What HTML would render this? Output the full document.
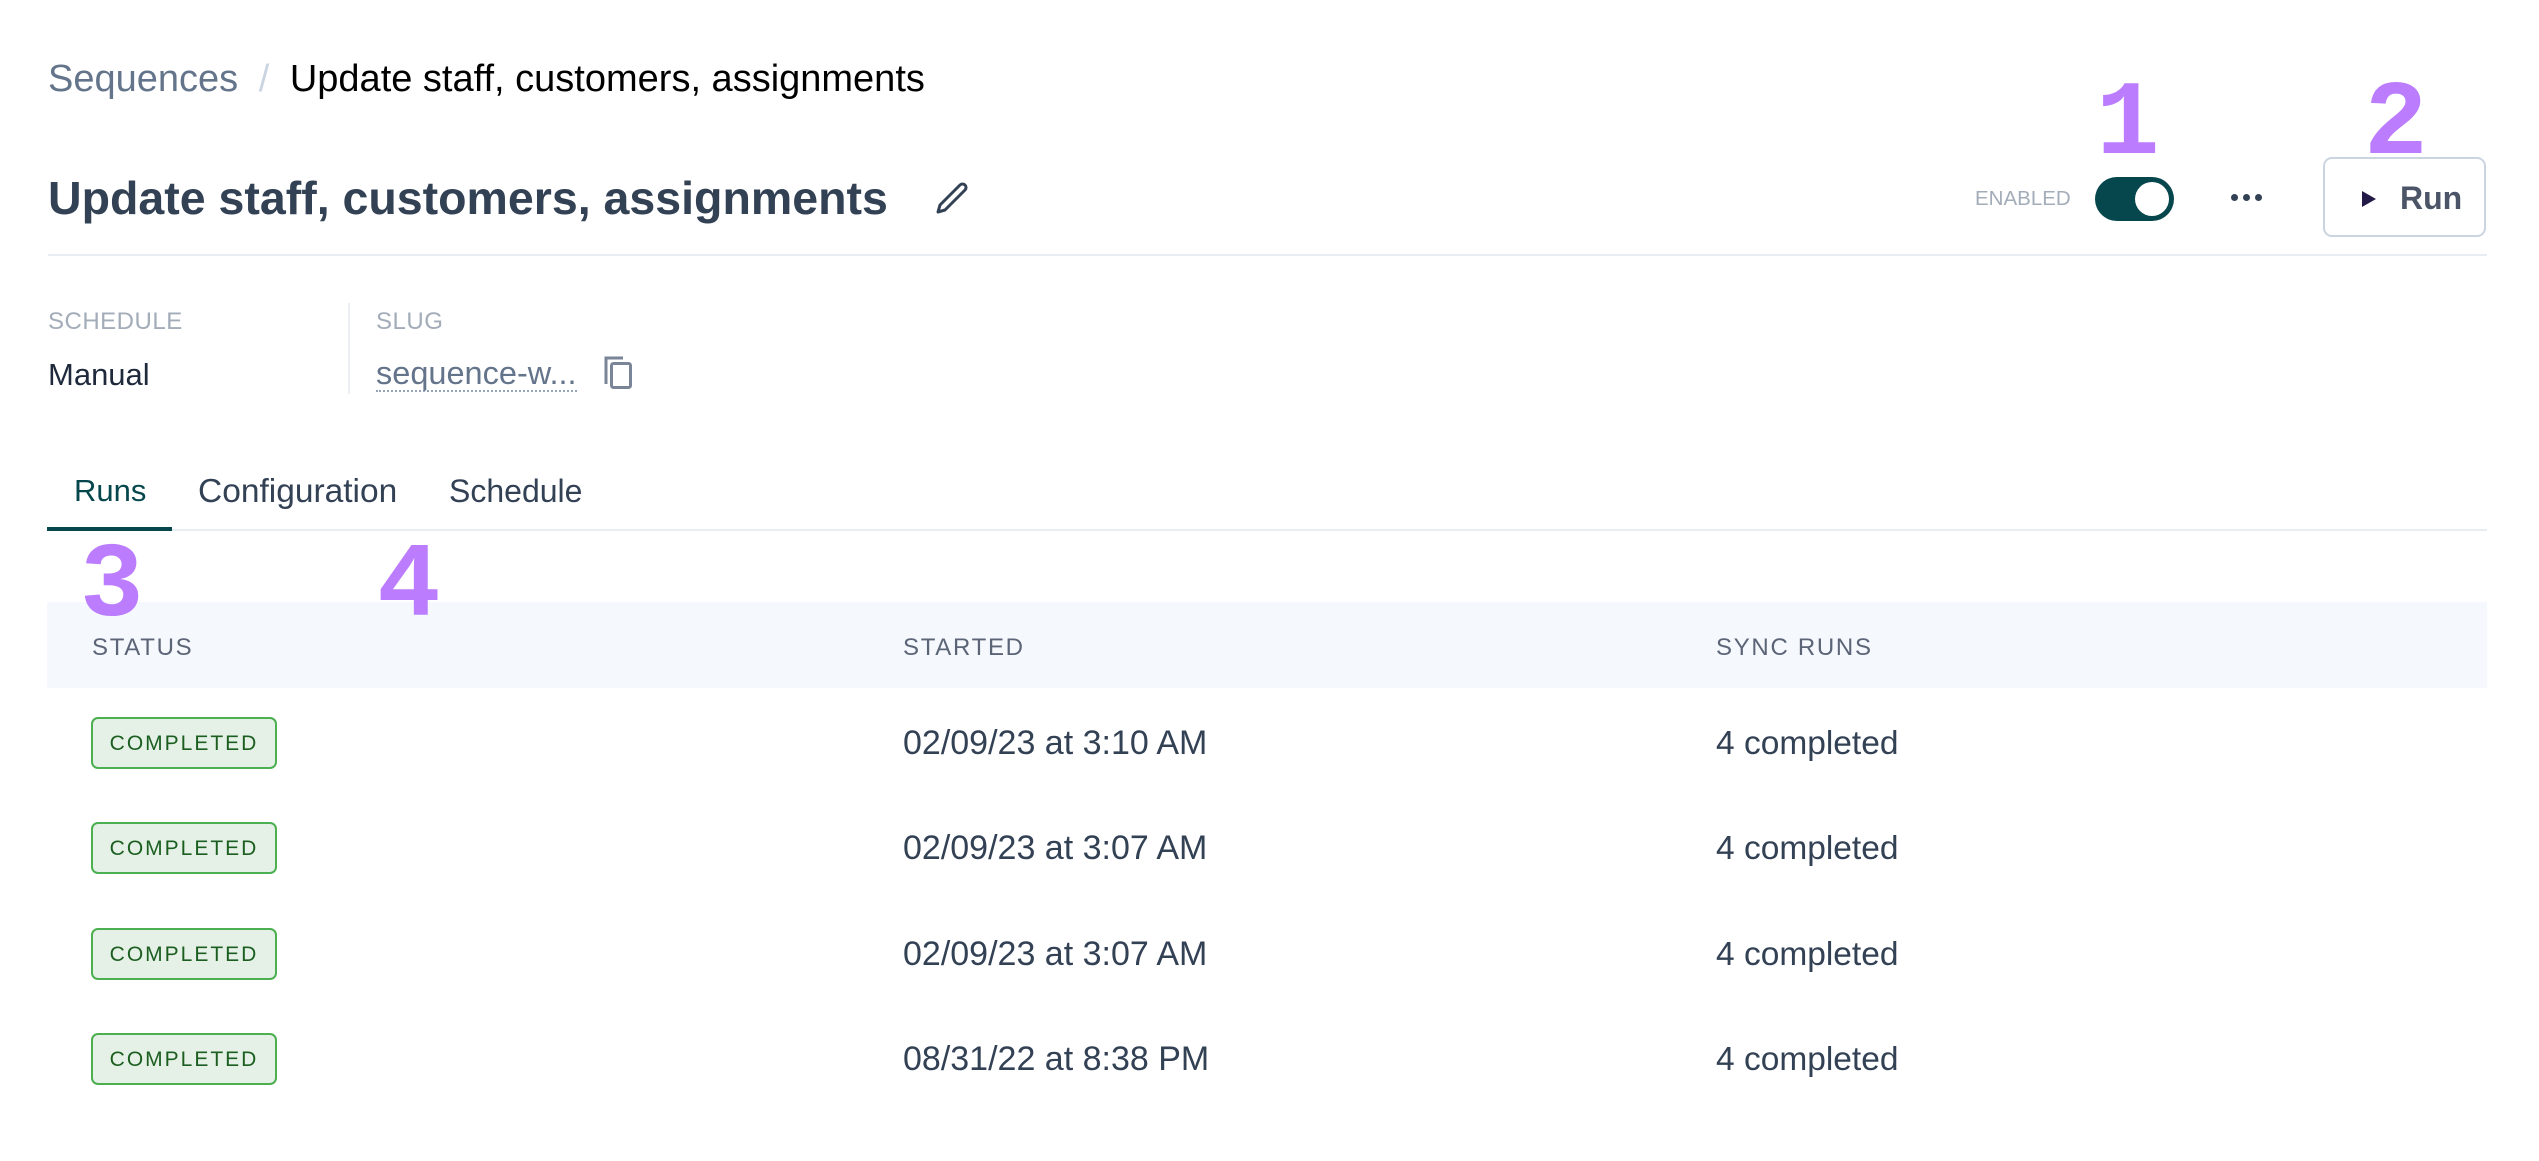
<!DOCTYPE html>
<html><head><meta charset="utf-8"><style>
*{margin:0;padding:0;box-sizing:border-box}
body{width:2539px;height:1161px;background:#fff;font-family:"Liberation Sans",Arial,sans-serif;position:relative;overflow:hidden;color:#334155}
.a{position:absolute;white-space:nowrap}
.num{font-family:"Liberation Mono",monospace;font-weight:bold;color:#bb7cfd;font-size:106px;line-height:1}
.lbl{font-size:24px;color:#a3acb9;letter-spacing:0.5px}
.th{font-size:24px;color:#5b6577;letter-spacing:1.7px;top:634px}
.badge{position:absolute;left:91px;width:186px;height:52px;border:2px solid #4caf50;border-radius:7px;background:#e5f1e7;color:#1b5e20;font-size:21px;letter-spacing:2px;text-align:center;line-height:50px}
.cell{font-size:34px;color:#334155}
.cnt{font-size:33.5px;color:#334155}
</style></head><body>
<div class="a" style="left:48px;top:58px;font-size:38px;color:#64748b">Sequences <span style="color:#cbd5e1;margin:0 10px">/</span> <span style="color:#000">Update staff, customers, assignments</span></div>
<div class="a" style="left:48px;top:171px;font-size:46.5px;font-weight:bold;color:#334155">Update staff, customers, assignments</div>
<svg class="a" style="left:932px;top:178px" width="40" height="40" viewBox="0 0 40 40"><path d="M6 34 L8 27 L28 7 A3.5 3.5 0 0 1 33 12 L13 32 Z" fill="none" stroke="#334155" stroke-width="3" stroke-linejoin="round"/></svg>
<div class="a num" style="left:2096px;top:72px">1</div>
<div class="a num" style="left:2364px;top:72px">2</div>
<div class="a" style="left:1975px;top:187px;font-size:20.5px;color:#a3acb9">ENABLED</div>
<div class="a" style="left:2095px;top:177px;width:79px;height:44px;border-radius:22px;background:#05474c"><div style="position:absolute;right:5px;top:5px;width:34px;height:34px;border-radius:50%;background:#fff"></div></div>
<div class="a" style="left:2231px;top:194px;width:32px;height:8px">
<span style="position:absolute;left:0;width:7px;height:7px;border-radius:50%;background:#334155"></span>
<span style="position:absolute;left:12px;width:7px;height:7px;border-radius:50%;background:#334155"></span>
<span style="position:absolute;left:24px;width:7px;height:7px;border-radius:50%;background:#334155"></span></div>
<div class="a" style="left:2323px;top:157px;width:163px;height:80px;border:2px solid #cbd5e1;border-radius:9px"></div>
<svg class="a" style="left:2360px;top:189px" width="18" height="20"><path d="M2 2 L16 10 L2 18 Z" fill="#241a48"/></svg>
<div class="a" style="left:2400px;top:180px;font-size:32px;font-weight:bold;color:#4b5567">Run</div>
<div class="a" style="left:48px;top:254px;width:2439px;height:2px;background:#e8ecf3"></div>
<div class="a lbl" style="left:48px;top:308px">SCHEDULE</div>
<div class="a" style="left:48px;top:357px;font-size:31px;color:#1e293b">Manual</div>
<div class="a" style="left:348px;top:303px;width:2px;height:91px;background:#eceff4"></div>
<div class="a lbl" style="left:376px;top:308px">SLUG</div>
<div class="a" style="left:376px;top:357px;font-size:32.5px;color:#64748b;border-bottom:2px dotted #94a3b8;line-height:33px">sequence-w...</div>
<svg class="a" style="left:603px;top:354px" width="34" height="36" viewBox="0 0 34 36"><path d="M3 30 V4 H20" fill="none" stroke="#7a8597" stroke-width="3"/><rect x="8.5" y="9.5" width="19" height="24" rx="2" fill="none" stroke="#7a8597" stroke-width="3"/></svg>
<div class="a" style="left:74px;top:473px;font-size:31px;color:#05474c">Runs</div>
<div class="a" style="left:198px;top:473px;font-size:33.5px;color:#334155">Configuration</div>
<div class="a" style="left:449px;top:473px;font-size:32px;color:#334155">Schedule</div>
<div class="a" style="left:47px;top:529px;width:2440px;height:2px;background:#e8ecf3"></div>
<div class="a" style="left:47px;top:527px;width:125px;height:4px;background:#05474c"></div>
<div class="a" style="left:47px;top:602px;width:2440px;height:86px;background:#f5f8fc"></div>
<div class="a num" style="left:80px;top:534px">3</div>
<div class="a num" style="left:377px;top:534px">4</div>
<div class="a th" style="left:92px">STATUS</div>
<div class="a th" style="left:903px">STARTED</div>
<div class="a th" style="left:1716px">SYNC RUNS</div>
<div class="badge" style="top:717px">COMPLETED</div>
<div class="a cell" style="left:903px;top:724px">02/09/23 at 3:10 AM</div>
<div class="a cnt" style="left:1716px;top:725px">4 completed</div>
<div class="badge" style="top:822px">COMPLETED</div>
<div class="a cell" style="left:903px;top:829px">02/09/23 at 3:07 AM</div>
<div class="a cnt" style="left:1716px;top:830px">4 completed</div>
<div class="badge" style="top:928px">COMPLETED</div>
<div class="a cell" style="left:903px;top:935px">02/09/23 at 3:07 AM</div>
<div class="a cnt" style="left:1716px;top:936px">4 completed</div>
<div class="badge" style="top:1033px">COMPLETED</div>
<div class="a cell" style="left:903px;top:1040px">08/31/22 at 8:38 PM</div>
<div class="a cnt" style="left:1716px;top:1041px">4 completed</div>
</body></html>
